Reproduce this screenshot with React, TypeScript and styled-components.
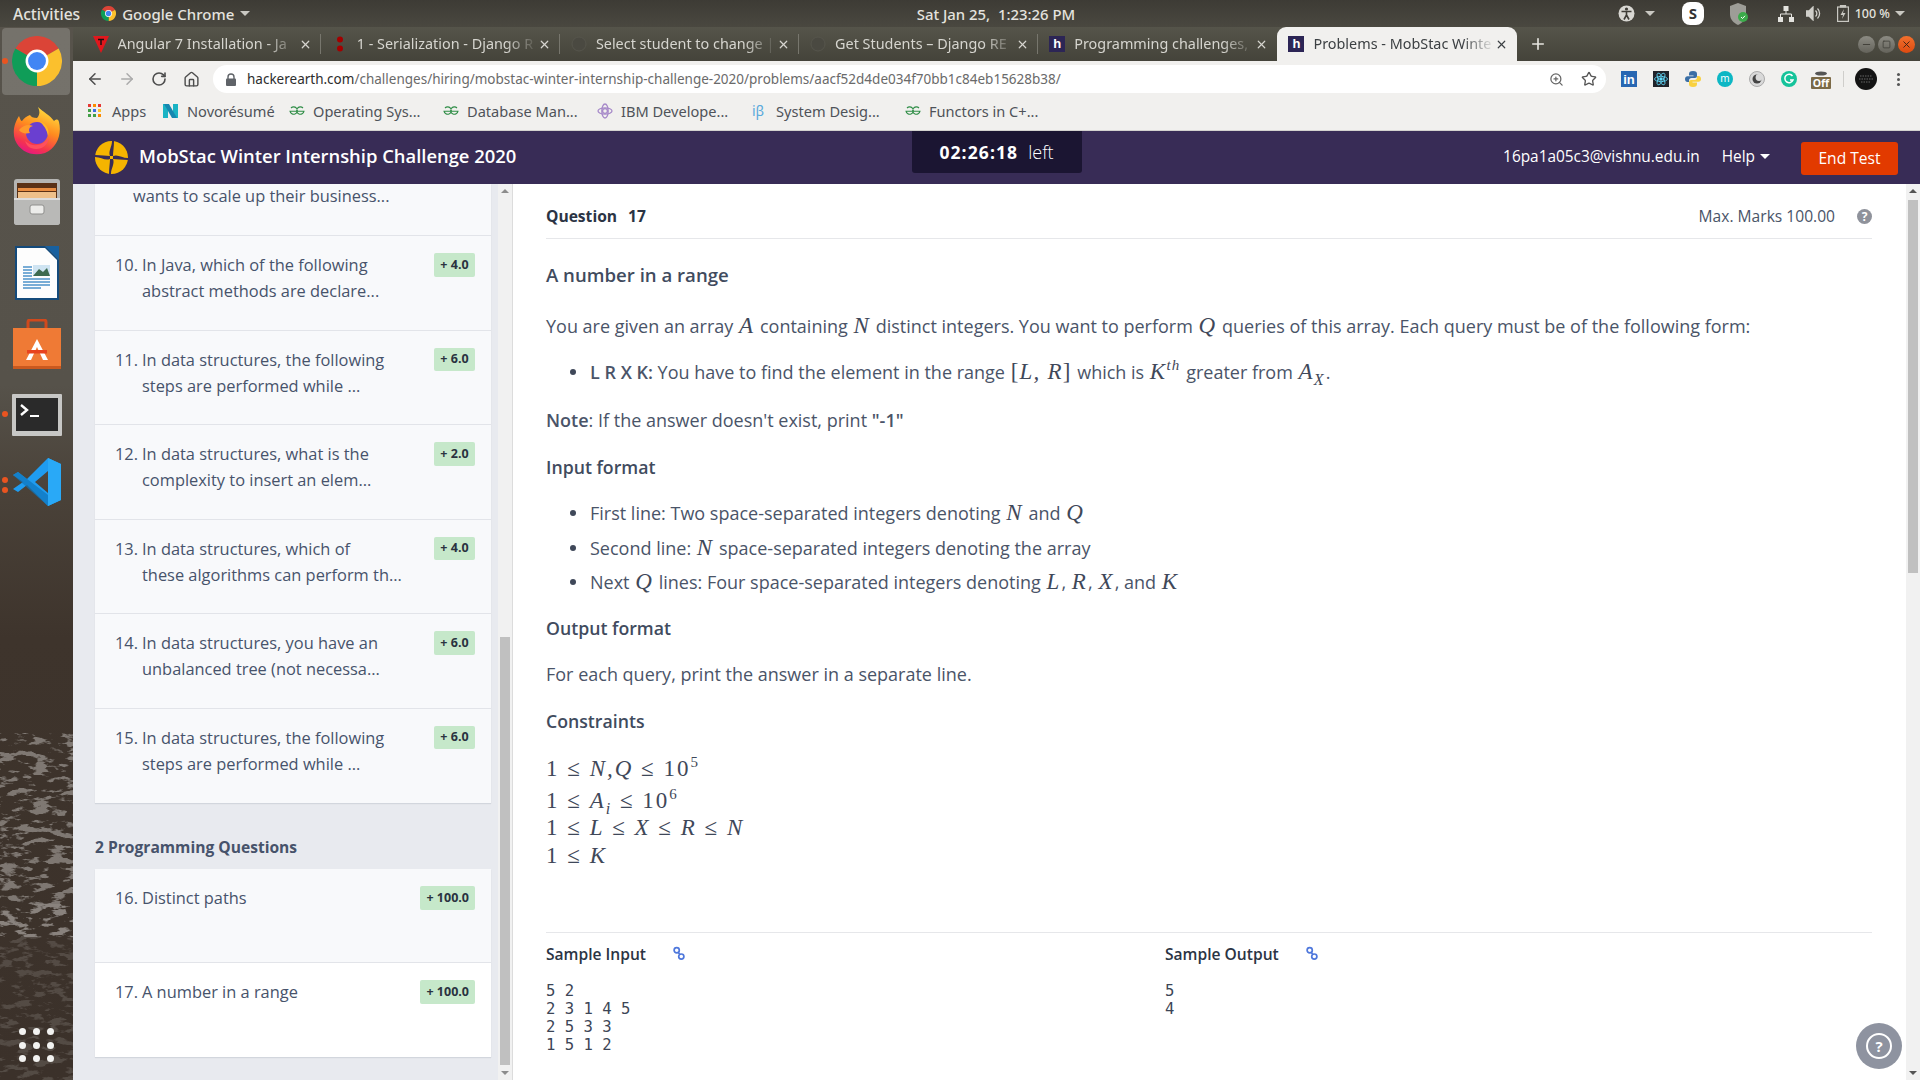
import React from 'react'
import styled, { createGlobalStyle } from 'styled-components'
import { ArrowLeft, ArrowRight, RotateCw, House, ZoomIn, Star, Plus, X, Minus, Square } from 'lucide-react'

const GlobalStyle = createGlobalStyle`
  html, body { margin: 0; padding: 0; height: 100%; overflow: hidden; }
  body { font-family: "Open Sans", "Noto Sans", sans-serif; color: #47536b; }
  * { box-sizing: border-box; }
`

const Screen = styled.div`
  width: 1920px;
  height: 1080px;
  display: flex;
  flex-direction: column;
  overflow: hidden;
`

/* gnome top bar */
const TopBar = styled.div`
  height: 27px;
  flex: none;
  display: grid;
  grid-template-columns: 1fr auto 1fr;
  align-items: center;
  padding-bottom: 1px;
  background: linear-gradient(#3d3b35, #4a4840);
  color: #e4e3df;
  font-family: "Noto Sans", sans-serif;
  font-size: 15px;
  font-weight: 500;
`
const TopLeft = styled.div`
  display: flex;
  align-items: center;
  padding-left: 13px;
  font-size: 15.6px;
`
const AppMenu = styled.div`
  display: flex;
  align-items: center;
  gap: 6px;
  margin-left: 21px;
  font-size: 15px;
`
const Caret = styled.span<{ $color?: string }>`
  display: inline-block;
  width: 0;
  height: 0;
  border-left: 5px solid transparent;
  border-right: 5px solid transparent;
  border-top: 5px solid ${p => p.$color || '#c9c8c2'};
`
const Clock = styled.div`
  font-size: 14.9px;
  margin-left: 72px;
`
const Tray = styled.div`
  display: flex;
  justify-content: flex-end;
  align-items: center;
  height: 27px;
  padding-right: 10px;
  font-size: 12.5px;
`
const TraySlot = styled.span<{ $w: number; $gap?: number }>`
  width: ${p => p.$w}px;
  margin-left: ${p => p.$gap || 0}px;
  display: flex;
  align-items: center;
  justify-content: center;
  flex: none;
`

const Body = styled.div`
  flex: 1;
  display: flex;
  min-height: 0;
`

/* launcher */
const Dock = styled.div`
  position: relative;
  width: 73px;
  flex: none;
  display: flex;
  flex-direction: column;
  overflow: hidden;
  background: linear-gradient(#57534b 0%, #56524a 34%, #4a4239 44%, #3e342c 58%, #3b312a 100%);
`
const Wallpaper = styled.svg`
  position: absolute;
  left: 0;
  top: 0;
  pointer-events: none;
`
const DockSlot = styled.div<{ $h: number; $active?: boolean }>`
  position: relative;
  height: ${p => p.$h}px;
  flex: none;
  display: flex;
  align-items: center;
  justify-content: center;
  &::before {
    content: '';
    display: ${p => (p.$active ? 'block' : 'none')};
    position: absolute;
    left: 2px;
    right: 3px;
    top: 1px;
    bottom: 0;
    border-radius: 4px;
    background: rgba(255, 255, 255, 0.18);
  }
  svg { position: relative; }
`
const RunDot = styled.span<{ $top: number }>`
  position: absolute;
  left: 2px;
  top: ${p => p.$top}px;
  width: 6px;
  height: 6px;
  border-radius: 50%;
  background: #e95420;
`
const DockGrid = styled.div`
  position: relative;
  margin-top: auto;
  margin-bottom: 18px;
  margin-left: 19px;
  width: 35px;
  display: grid;
  grid-template-columns: repeat(3, 7px);
  justify-content: space-between;
  row-gap: 6.5px;
`
const GridDot = styled.span`
  width: 7px;
  height: 7px;
  border-radius: 50%;
  background: #f2f2f0;
`

const Window = styled.div`
  flex: 1;
  min-width: 0;
  display: flex;
  flex-direction: column;
`

/* chrome */
const TabStrip = styled.div`
  height: 34px;
  flex: none;
  display: flex;
  align-items: flex-end;
  padding-left: 8.5px;
  background: linear-gradient(#55544a, #44433a);
  font-family: "Noto Sans", sans-serif;
  font-size: 14.4px;
`
const Tab = styled.div<{ $active?: boolean; $sep?: boolean }>`
  position: relative;
  width: 239.2px;
  height: 34px;
  flex: none;
  display: flex;
  align-items: center;
  padding: 0 9px 0 11px;
  color: ${p => (p.$active ? '#3c4043' : '#d6d5cf')};
  background: ${p => (p.$active ? '#f1f0ee' : 'transparent')};
  border-radius: 9px 9px 0 0;
  &::after {
    content: '';
    display: ${p => (p.$sep ? 'block' : 'none')};
    position: absolute;
    right: 0;
    top: 7px;
    bottom: 7px;
    width: 1px;
    background: #77766d;
  }
`
const TabIcon = styled.span`
  width: 16px;
  height: 18px;
  flex: none;
  display: flex;
  align-items: center;
  justify-content: center;
`
const TabTitle = styled.span`
  flex: 1;
  margin: 0 0 1px 9px;
  overflow: hidden;
  white-space: nowrap;
  -webkit-mask-image: linear-gradient(90deg, #000 82%, transparent 100%);
  mask-image: linear-gradient(90deg, #000 82%, transparent 100%);
`
const HFav = styled.span`
  width: 16px;
  height: 16px;
  background: #2c2555;
  color: #fff;
  font-size: 13px;
  font-weight: 700;
  line-height: 15px;
  text-align: center;
  font-family: "Liberation Sans", sans-serif;
`
const NewTab = styled.div`
  margin-left: 12px;
  height: 34px;
  display: flex;
  align-items: center;
  color: #e6e5df;
`
const WinButtons = styled.div`
  margin-left: auto;
  height: 34px;
  padding-right: 5px;
  display: flex;
  align-items: center;
  gap: 3px;
`
const WinButton = styled.span<{ $close?: boolean }>`
  width: 17px;
  height: 17px;
  border-radius: 50%;
  display: flex;
  align-items: center;
  justify-content: center;
  color: ${p => (p.$close ? '#3a2216' : '#3e3d37')};
  background: ${p => (p.$close ? 'linear-gradient(#f2702d, #dd4a10)' : 'linear-gradient(#8c8b83, #64635b)')};
`
const Toolbar = styled.div`
  height: 32px;
  flex: none;
  display: flex;
  align-items: center;
  background: #f1f0ee;
  padding: 4px 0 0 6px;
  color: #5b5b5b;
`
const NavSlot = styled.span<{ $faded?: boolean }>`
  width: 32px;
  flex: none;
  display: flex;
  justify-content: center;
  color: ${p => (p.$faded ? '#ababab' : '#4d4d4d')};
`
const Omnibox = styled.div`
  width: 1393px;
  height: 28px;
  margin-left: 6px;
  flex: none;
  display: flex;
  align-items: center;
  background: #fff;
  border-radius: 14px;
  padding: 0 4px 0 13px;
  font-family: "Noto Sans", sans-serif;
  font-size: 13.5px;
  color: #6a6a6a;
`
const Url = styled.span`
  margin-left: 11px;
  white-space: nowrap;
  flex: 1;
  b { font-weight: 400; color: #2d2d2d; }
`
const Extensions = styled.div`
  flex: 1;
  display: flex;
  align-items: center;
`
const ExtSlot = styled.span<{ $w: number }>`
  width: ${p => p.$w}px;
  flex: none;
  display: flex;
  justify-content: center;
  align-items: center;
`
const ExtDivider = styled.span`
  width: 1px;
  height: 16px;
  margin: 0 10px 0 6px;
  background: #cfcecb;
`
const MenuDots = styled.span`
  width: 3px;
  height: 3px;
  border-radius: 50%;
  background: #555;
  box-shadow: 0 -5px 0 #555, 0 5px 0 #555;
`
const Bookmarks = styled.div`
  height: 38px;
  flex: none;
  display: flex;
  align-items: center;
  padding: 0 0 2px 15px;
  background: #f1f0ee;
  border-bottom: 1px solid #d3d2cf;
  font-family: "Noto Sans", sans-serif;
  font-size: 14.6px;
  color: #4f5359;
`
const Bookmark = styled.div<{ $w: number }>`
  width: ${p => p.$w}px;
  flex: none;
  display: flex;
  align-items: center;
  gap: 8px;
  white-space: nowrap;
`
const BetaMark = styled.span`
  width: 16px;
  color: #5aa9dc;
  font-size: 14px;
`

/* hackerearth header */
const SiteHeader = styled.div`
  height: 53px;
  flex: none;
  display: grid;
  grid-template-columns: 1fr 170px 1fr;
  background: #382c56;
  color: #fff;
`
const Brand = styled.div`
  display: flex;
  align-items: center;
  gap: 11px;
  padding: 0 0 0 22px;
  font-size: 18.4px;
  font-weight: 600;
`
const BrandName = styled.span`
  margin-bottom: 4px;
`
const Timer = styled.div`
  height: 42px;
  display: flex;
  align-items: center;
  justify-content: center;
  gap: 10px;
  background: #1b1532;
  border-radius: 0 0 3px 3px;
  font-size: 18px;
  font-weight: 300;
  b { font-weight: 700; font-size: 17.5px; letter-spacing: 1.1px; }
`
const HeaderRight = styled.div`
  display: flex;
  align-items: center;
  justify-content: flex-end;
  padding-right: 22px;
  font-size: 15.4px;
  padding-top: 1px;
`
const HeaderText = styled.span`
  margin-bottom: 4px;
`
const HelpMenu = styled.span`
  margin: 0 0 4px 22px;
  display: flex;
  align-items: center;
  gap: 5px;
`
const EndButton = styled.button`
  width: 97px;
  height: 33px;
  margin-left: 31px;
  border: 0;
  border-radius: 3px;
  background: #e23a00;
  color: #fff;
  font: 500 15.6px "Open Sans", sans-serif;
`

const Workspace = styled.div`
  position: relative;
  flex: 1;
  min-height: 0;
  display: flex;
`
const Sidebar = styled.div`
  width: 425px;
  flex: none;
  padding: 0 7px 0 22px;
  background: #e8eaef;
  overflow: hidden;
`
const Card = styled.div`
  background: #f8f9fb;
  box-shadow: 0 1px 1px rgba(60, 70, 90, 0.12);
`
const FirstLine = styled.div`
  height: 52px;
  padding: 0 0 0 38px;
  font-size: 16.4px;
  font-weight: 500;
  line-height: 24px;
  border-bottom: 1px solid #e2e4e9;
`
const Row = styled.div<{ $current?: boolean; $last?: boolean; $h?: number }>`
  height: ${p => p.$h || 94.5}px;
  display: flex;
  padding: 16px 16px 0 20px;
  background: ${p => (p.$current ? '#fff' : 'transparent')};
  border-bottom: ${p => (p.$last ? '0' : '1px solid #e2e4e9')};
  font-size: 16.4px;
  font-weight: 500;
  line-height: 26px;
`
const RowNumber = styled.span`
  width: 27px;
  flex: none;
`
const RowText = styled.span`
  flex: 1;
  white-space: pre-line;
`
const Badge = styled.span`
  height: 23.5px;
  min-width: 41px;
  flex: none;
  margin-top: 1px;
  padding: 0 6px;
  display: flex;
  align-items: center;
  justify-content: center;
  background: #c6e8ca;
  border-radius: 2px;
  color: #2a3240;
  font-size: 12.5px;
  font-weight: 700;
`
const GroupTitle = styled.div`
  margin: 32px 0 10px;
  height: 24px;
  line-height: 24px;
  font-size: 15.6px;
  font-weight: 700;
`
const ScrollTrack = styled.div<{ $left?: boolean }>`
  position: relative;
  width: ${p => (p.$left ? 15 : 14)}px;
  flex: none;
  background: #f1f1f1;
  border-right: ${p => (p.$left ? '1px solid #dcdcdc' : '0')};
`
const ScrollThumb = styled.div<{ $top: number; $h: number }>`
  position: absolute;
  left: 2px;
  right: 2px;
  top: ${p => p.$top}px;
  height: ${p => p.$h}px;
  background: #c0c0c0;
`
const ScrollArrow = styled.span<{ $down?: boolean; $dark?: boolean }>`
  position: absolute;
  left: 3px;
  ${p => (p.$down ? 'bottom: 5px;' : 'top: 5px;')}
  width: 0;
  height: 0;
  border-left: 4px solid transparent;
  border-right: 4px solid transparent;
  ${p => (p.$down ? 'border-top' : 'border-bottom')}: 4px solid ${p => (p.$dark ? '#555' : '#8d8d8d')};
`

/* question */
const Main = styled.div`
  flex: 1;
  min-width: 0;
  padding: 0 34px 0 33px;
  background: #fff;
  font-size: 18px;
  color: #4a5468;
`
const QuestionBar = styled.div`
  height: 55px;
  padding-top: 10px;
  display: flex;
  align-items: center;
  justify-content: space-between;
  border-bottom: 1px solid #e6e7ea;
  font-size: 15.6px;
`
const QuestionNo = styled.b`
  color: #2b3444;
  font-weight: 700;
  word-spacing: 7px;
`
const Marks = styled.span`
  display: flex;
  align-items: center;
  gap: 22px;
`
const HelpDot = styled.span`
  width: 15px;
  height: 15px;
  border-radius: 50%;
  background: #8f929b;
  color: #fff;
  font-size: 12px;
  font-weight: 700;
  line-height: 15px;
  text-align: center;
`
const Title = styled.div<{ $top: number; $big?: boolean }>`
  margin-top: ${p => p.$top}px;
  line-height: 24px;
  font-size: ${p => (p.$big ? 18.6 : 17.7)}px;
  font-weight: 600;
  color: #414b5e;
`
const Para = styled.div<{ $top: number }>`
  margin-top: ${p => p.$top}px;
  line-height: 28px;
  white-space: nowrap;
  b { font-weight: 600; }
`
const Item = styled(Para)`
  position: relative;
  padding-left: 44px;
  &::before {
    content: '';
    position: absolute;
    left: 24px;
    top: 11px;
    width: 6px;
    height: 6px;
    border-radius: 50%;
    background: #3f4859;
  }
`
const MathVar = styled.i`
  font-family: "Liberation Serif", "DejaVu Serif", serif;
  font-size: 23px;
  font-style: italic;
  line-height: 1;
  margin: 0 1px;
  color: #3f4859;
  letter-spacing: 1.2px;
  sup { font-size: 15px; line-height: 0; }
  sub { font-size: 16px; line-height: 0; }
`
const Upright = styled.span`
  font-style: normal;
`
const ConstraintLine = styled(Para)`
  ${MathVar} { letter-spacing: 2px; margin: 0; }
`
const Divider = styled.div`
  margin-top: 62px;
  height: 1px;
  background: #e6e7ea;
`
const Samples = styled.div`
  display: grid;
  grid-template-columns: 619px 1fr;
  padding-top: 11px;
`
const SampleHead = styled.div`
  display: flex;
  align-items: center;
  gap: 27px;
  height: 20px;
  color: #2b3444;
  font-size: 15.6px;
  font-weight: 600;
`
const Code = styled.pre`
  margin: 18px 0 0;
  font-family: "DejaVu Sans Mono", "Liberation Mono", monospace;
  font-size: 15.6px;
  line-height: 18px;
  color: #3c4556;
`
const Floating = styled.div`
  position: absolute;
  right: 18px;
  bottom: 11px;
  width: 46px;
  height: 46px;
  border-radius: 50%;
  background: #8e93a0;
  display: flex;
  align-items: center;
  justify-content: center;
`
const FloatingRing = styled.span`
  width: 26px;
  height: 26px;
  border: 2px solid #fff;
  border-radius: 50%;
  color: #fff;
  font-size: 15px;
  font-weight: 700;
  line-height: 22px;
  text-align: center;
`

const ChromeLogo = ({ size }: { size: number }) => (
  <svg width={size} height={size} viewBox="0 0 48 48">
    <path d="M24 24 L3.2 12 A24 24 0 0 1 44.8 12 Z" fill="#db4437" />
    <path d="M24 24 L44.8 12 A24 24 0 0 1 24 48 Z" fill="#fbc02d" />
    <path d="M24 24 L24 48 A24 24 0 0 1 3.2 12 Z" fill="#0f9d58" />
    <circle cx="24" cy="24" r="11" fill="#fff" />
    <circle cx="24" cy="24" r="8.6" fill="#4285f4" />
  </svg>
)

const FirefoxLogo = () => (
  <svg width="48" height="50" viewBox="0 0 48 50">
    <defs>
      <linearGradient id="ffA" x1="0.7" y1="0" x2="0.3" y2="1">
        <stop offset="0" stopColor="#ffe23f" />
        <stop offset="0.45" stopColor="#ff8a1f" />
        <stop offset="0.8" stopColor="#f4334f" />
        <stop offset="1" stopColor="#e31587" />
      </linearGradient>
    </defs>
    <path d="M25 1 C30 6 37 9 41 15 C44 13 45 13 46 16 C49 28 44 42 32 47 C20 51 7 46 2 34 C-1 25 2 16 6 10 C7 13 8 15 9 15 C11 12 14 10 17 9 C18 11 20 12 24 12 C27 9 27 5 25 1 Z" fill="url(#ffA)" />
    <circle cx="24" cy="27" r="11" fill="#6a3fd0" />
    <path d="M6 24 C10 19 16 18 20 20 C16 21 15 24 17 27 C12 28 8 27 6 24 Z" fill="#ff9a2b" />
    <path d="M26 15 C33 17 37 23 35 30 C34 24 31 19 26 15 Z" fill="#ffb52a" />
    <path d="M12 35 C20 42 31 40 36 31 C35 41 26 45 18 42 C15 41 13 38 12 35 Z" fill="#ff4f5e" />
  </svg>
)

const FilesIcon = () => (
  <svg width="48" height="48" viewBox="0 0 48 48">
    <rect x="1" y="1" width="46" height="46" rx="3" fill="#b5b5b3" />
    <rect x="4" y="5" width="40" height="16" fill="#5a3116" />
    <rect x="5" y="10" width="38" height="3" fill="#e88d42" />
    <rect x="5" y="14" width="38" height="6" fill="#eec08a" />
    <path d="M1 21 H47 V44 a3 3 0 0 1 -3 3 H4 a3 3 0 0 1 -3 -3 Z" fill="#b9b9b7" />
    <rect x="1" y="20" width="46" height="2" fill="#ddd" />
    <rect x="17" y="27" width="14" height="9" rx="2" fill="#ececea" stroke="#8f8f8d" />
  </svg>
)

const WriterIcon = () => (
  <svg width="44" height="54" viewBox="0 0 44 54">
    <path d="M0 0 H30 L44 14 V54 H0 Z" fill="#144a7b" />
    <path d="M2 2 H30 L42 14 V52 H2 Z" fill="#fdfdfd" />
    <path d="M30 0 H44 V14 Z" fill="#18609f" />
    <rect x="18" y="19" width="17" height="11" fill="#cfe4f2" />
    <path d="M18 30 L24 23 L28 26 L32 22 L35 30 Z" fill="#3d6b50" />
    <path d="M8 21 H17 M8 24 H17 M8 27 H17 M8 30 H17 M8 33 H35 M8 36 H35 M8 39 H35 M8 42 H26" stroke="#4e93c9" strokeWidth="1.4" />
  </svg>
)

const StoreIcon = () => (
  <svg width="48" height="50" viewBox="0 0 48 50">
    <path d="M15 12 V3 a2 2 0 0 1 2 -2 H31 a2 2 0 0 1 2 2 V12" fill="none" stroke="#d0491c" strokeWidth="3" />
    <path d="M0 9 H48 V49 H0 Z" fill="#ef7a35" />
    <rect y="47" width="48" height="3" fill="#c9591f" />
    <path d="M24 20 L35 41 H30 L24 28 L18 41 H13 Z" fill="#fff" />
    <rect x="14" y="31" width="20" height="3.5" fill="#e8431e" />
  </svg>
)

const TerminalIcon = () => (
  <svg width="50" height="42" viewBox="0 0 50 42">
    <rect width="50" height="42" rx="1" fill="#c7c7c5" />
    <rect x="4" y="4" width="42" height="33" fill="#2a2a2a" />
    <path d="M9 11 L15 16 L9 21" fill="none" stroke="#fff" strokeWidth="2.4" />
    <rect x="18" y="21" width="9" height="2" fill="#fff" />
  </svg>
)

const VsCodeIcon = () => (
  <svg width="48" height="48" viewBox="0 0 48 48">
    <path d="M35 0 L48 6 V42 L35 48 L14 27 L5 34 L0 31 L10 24 L0 17 L5 14 L14 21 Z M35 13 L22 24 L35 35 Z" fill="#1f9cf0" fillRule="evenodd" />
    <path d="M35 0 L48 6 V42 L35 48 Z M35 13" fill="#29a9f7" />
    <path d="M0 17 L5 14 L35 37 V48 Z" fill="#0e75bb" opacity="0.7" />
  </svg>
)

const MobStacLogo = () => (
  <svg width="33" height="33" viewBox="0 0 33 33">
    <circle cx="16.5" cy="16.5" r="16.5" fill="#f5b400" />
    <g fill="#382c56">
      <path d="M15 15 C13 10 17 6 17 0 L19 0 C19 6 18 11 18 15 Z" />
      <path d="M18 15 C23 13 27 17 33 17 L33 19 C27 19 22 18 18 18 Z" />
      <path d="M18 18 C20 23 16 27 16 33 L14 33 C14 27 15 22 15 18 Z" />
      <path d="M15 18 C10 20 6 16 0 16 L0 14 C6 14 11 15 15 15 Z" />
    </g>
  </svg>
)

const AppsIcon = () => (
  <svg width="16" height="13" viewBox="0 0 16 13">
    {['#e53935', '#fb8c00', '#e53935', '#43a047', '#3f6fe0', '#fbc02d', '#43a047', '#43a047', '#fb8c00'].map((c, i) => (
      <rect key={i} x={(i % 3) * 5} y={Math.floor(i / 3) * 5} width="3" height="3" fill={c} />
    ))}
  </svg>
)

const GfgIcon = () => (
  <svg width="16" height="12" viewBox="0 0 16 12" fill="none" stroke="#2f8d46" strokeWidth="1.1">
    <path d="M8 6.2 H1 A3.7 3.7 0 1 0 2 3 M8 6.2 H15 A3.7 3.7 0 1 1 14 3" />
  </svg>
)

const PythonIcon = () => (
  <svg width="16" height="16" viewBox="0 0 16 16">
    <path d="M8 0 C5 0 4 1 4 3 V4.5 H8.5 V5.2 H2.5 C1 5.2 0 6.3 0 8 C0 10 1 11 2.5 11 H4 V9.5 C4 8 5 7 6.5 7 H10 C11.2 7 12 6.2 12 5 V3 C12 1 11 0 8 0 Z" fill="#3a6ea5" />
    <path d="M8 16 C11 16 12 15 12 13 V11.5 H7.5 V10.8 H13.5 C15 10.8 16 9.7 16 8 C16 6 15 5 13.5 5 H12 V6.5 C12 8 11 9 9.5 9 H6 C4.8 9 4 9.8 4 11 V13 C4 15 5 16 8 16 Z" fill="#f9d13f" />
  </svg>
)

const LinkIcon = () => (
  <svg width="12" height="15" viewBox="0 0 12 15" fill="none" stroke="#4f78dc" strokeWidth="1.7">
    <circle cx="3.7" cy="4.2" r="2.6" />
    <circle cx="8.3" cy="10.6" r="2.6" />
    <path d="M5.2 6.3 L6.8 8.5" />
  </svg>
)

const tabs = [
  { title: 'Angular 7 Installation - Ja', icon: <svg width="16" height="17" viewBox="0 0 16 17"><path d="M0 0 H16 L8 17 Z" fill="#e1171d" /><path d="M5 3.5 H11 M8 3.5 V9" stroke="#111" strokeWidth="1.4" /></svg> },
  { title: '1 - Serialization - Django R', icon: <svg width="6" height="16" viewBox="0 0 6 16"><circle cx="3" cy="3.5" r="3" fill="#a30000" /><circle cx="3" cy="12.5" r="3" fill="#a30000" /></svg> },
  { title: 'Select student to change |', icon: <svg width="16" height="16"><circle cx="8" cy="8" r="7" fill="#4a4941" stroke="#56554c" /></svg> },
  { title: 'Get Students – Django RE', icon: <svg width="16" height="16"><circle cx="8" cy="8" r="7" fill="#4a4941" stroke="#56554c" /></svg> },
  { title: 'Programming challenges,', icon: <HFav>h</HFav> },
]

const bookmarks = [
  { label: 'Apps', icon: <AppsIcon />, w: 74 },
  { label: 'Novorésumé', icon: <svg width="17" height="16" viewBox="0 0 17 16"><path d="M1 1 L6 1 L6 15 L1 15 Z M11 1 L16 1 L16 15 L11 15 Z" fill="#1ab3c4" /><path d="M2 1 L7 1 L15 15 L10 15 Z" fill="#1687b0" /></svg>, w: 127 },
  { label: 'Operating Sys...', icon: <GfgIcon />, w: 154 },
  { label: 'Database Man...', icon: <GfgIcon />, w: 154 },
  { label: 'IBM Develope...', icon: <svg width="16" height="16" viewBox="0 0 16 16" fill="none" stroke="#a78ac9" strokeWidth="1.3"><ellipse cx="8" cy="8" rx="7" ry="3.2" /><ellipse cx="8" cy="8" rx="3.2" ry="7" /><circle cx="8" cy="8" r="2.4" /></svg>, w: 155 },
  { label: 'System Desig...', icon: <BetaMark>iβ</BetaMark>, w: 153 },
  { label: 'Functors in C+...', icon: <GfgIcon />, w: 160 },
]

const questions = [
  ['10.', 'In Java, which of the following\nabstract methods are declare...', '+ 4.0'],
  ['11.', 'In data structures, the following\nsteps are performed while ...', '+ 6.0'],
  ['12.', 'In data structures, what is the\ncomplexity to insert an elem...', '+ 2.0'],
  ['13.', 'In data structures, which of\nthese algorithms can perform th...', '+ 4.0'],
  ['14.', 'In data structures, you have an\nunbalanced tree (not necessa...', '+ 6.0'],
  ['15.', 'In data structures, the following\nsteps are performed while ...', '+ 6.0'],
]

export default function App() {
  return (
    <Screen>
      <GlobalStyle />
      <TopBar>
        <TopLeft>
          Activities
          <AppMenu>
            <ChromeLogo size={15} />
            Google Chrome
            <Caret />
          </AppMenu>
        </TopLeft>
        <Clock>Sat Jan 25,&nbsp; 1:23:26 PM</Clock>
        <Tray>
          <TraySlot $w={20}>
            <svg width="17" height="17" viewBox="0 0 17 17"><circle cx="8.5" cy="8.5" r="8" fill="#d8d7d2" /><circle cx="8.5" cy="4" r="1.6" fill="#3f3d37" /><path d="M3.5 6.5 H13.5 M8.5 6.5 V10 M8.5 10 L6 14.5 M8.5 10 L11 14.5" stroke="#3f3d37" strokeWidth="1.6" fill="none" /></svg>
          </TraySlot>
          <TraySlot $w={26}><Caret /></TraySlot>
          <TraySlot $w={60}>
            <svg width="22" height="23" viewBox="0 0 22 23"><rect width="22" height="23" rx="8" fill="#fff" /><text x="11" y="17" textAnchor="middle" fontSize="15" fontWeight="700" fill="#333" fontFamily="Noto Sans">S</text></svg>
          </TraySlot>
          <TraySlot $w={32}>
            <svg width="20" height="24" viewBox="0 0 20 24"><path d="M9 1 L17 4 V12 C17 18 13 21 9 23 C5 21 1 18 1 12 V4 Z" fill="#9d9d97" /><circle cx="14" cy="15" r="5" fill="#3bab4a" /><path d="M12 15 L13.5 16.5 L16 13.8" stroke="#fff" fill="none" /></svg>
          </TraySlot>
          <TraySlot $w={22} $gap={20}>
            <svg width="16" height="16" viewBox="0 0 16 16" fill="#e4e3df"><rect x="5.5" y="0" width="5" height="5" /><rect x="0" y="11" width="5" height="5" /><rect x="11" y="11" width="5" height="5" /><path d="M8 5 V8 M2.5 11 V8 H13.5 V11" stroke="#e4e3df" fill="none" /></svg>
          </TraySlot>
          <TraySlot $w={34}>
            <svg width="16" height="15" viewBox="0 0 16 15" fill="none" stroke="#d0cfca" strokeWidth="1.3"><path d="M0 5 H3 L7 1 V14 L3 10 H0 Z" fill="#d0cfca" /><path d="M9.5 4.5 A4 4 0 0 1 9.5 10.5 M11.5 2.5 A7 7 0 0 1 11.5 12.5" /></svg>
          </TraySlot>
          <TraySlot $w={24}>
            <svg width="12" height="17" viewBox="0 0 12 17" fill="none" stroke="#c9c8c2" strokeWidth="1.2"><rect x="0.6" y="2" width="10.8" height="14.4" /><rect x="3.5" y="0" width="5" height="2" fill="#c9c8c2" /><path d="M7 4 L3.5 10 H6 L5 14 L8.5 8 H6 Z" fill="#c9c8c2" stroke="none" /></svg>
          </TraySlot>
          <span>100 %</span>
          <TraySlot $w={20}><Caret /></TraySlot>
        </Tray>
      </TopBar>
      <Body>
        <Dock>
          <Wallpaper width="73" height="1053">
            <filter id="rock">
              <feTurbulence type="fractalNoise" baseFrequency="0.06 0.16" numOctaves="4" seed="8" />
              <feColorMatrix values="0 0 0 0 0.46  0 0 0 0 0.44  0 0 0 0 0.42  0 0 0 9 -4.7" />
            </filter>
            <rect y="723" width="73" height="170" filter="url(#rock)" opacity="0.55" />
            <rect y="893" width="73" height="160" filter="url(#rock)" opacity="0.2" />
          </Wallpaper>
          <DockSlot $h={68} $active>
            <RunDot $top={31} />
            <ChromeLogo size={50} />
          </DockSlot>
          <DockSlot $h={71}><FirefoxLogo /></DockSlot>
          <DockSlot $h={71}><FilesIcon /></DockSlot>
          <DockSlot $h={71}><WriterIcon /></DockSlot>
          <DockSlot $h={71}><StoreIcon /></DockSlot>
          <DockSlot $h={71}>
            <RunDot $top={32} />
            <TerminalIcon />
          </DockSlot>
          <DockSlot $h={64}>
            <RunDot $top={27} />
            <RunDot $top={37} />
            <VsCodeIcon />
          </DockSlot>
          <DockGrid>
            {Array.from({ length: 9 }).map((_, i) => <GridDot key={i} />)}
          </DockGrid>
        </Dock>
        <Window>
          <TabStrip>
            {tabs.map((t, i) => (
              <Tab key={t.title} $sep={i < 4}>
                <TabIcon>{t.icon}</TabIcon>
                <TabTitle>{t.title}</TabTitle>
                <X size={13} strokeWidth={2.2} />
              </Tab>
            ))}
            <Tab $active>
              <TabIcon><HFav>h</HFav></TabIcon>
              <TabTitle>Problems - MobStac Winte</TabTitle>
              <X size={13} strokeWidth={2.2} />
            </Tab>
            <NewTab><Plus size={18} strokeWidth={2.2} /></NewTab>
            <WinButtons>
              <WinButton><Minus size={11} /></WinButton>
              <WinButton><Square size={9} /></WinButton>
              <WinButton $close><X size={11} /></WinButton>
            </WinButtons>
          </TabStrip>
          <Toolbar>
            <NavSlot><ArrowLeft size={18} /></NavSlot>
            <NavSlot $faded><ArrowRight size={18} /></NavSlot>
            <NavSlot><RotateCw size={16} strokeWidth={2.4} /></NavSlot>
            <NavSlot><House size={17} /></NavSlot>
            <Omnibox>
              <svg width="10" height="13" viewBox="0 0 10 13"><path d="M2 6 V4 a3 3 0 0 1 6 0 V6" fill="none" stroke="#5f6368" strokeWidth="1.4" /><rect y="5.5" width="10" height="7.5" rx="1" fill="#5f6368" /></svg>
              <Url><b>hackerearth.com</b>/challenges/hiring/mobstac-winter-internship-challenge-2020/problems/aacf52d4de034f70bb1c84eb15628b38/</Url>
              <ExtSlot $w={40}><ZoomIn size={15} color="#666" /></ExtSlot>
              <ExtSlot $w={26}><Star size={16} color="#555" /></ExtSlot>
            </Omnibox>
            <Extensions>
              <ExtSlot $w={7} />
              <ExtSlot $w={32}>
                <svg width="16" height="16" viewBox="0 0 16 16"><rect width="16" height="16" fill="#2867b2" /><text x="8" y="13" textAnchor="middle" fontSize="13" fontWeight="700" fill="#fff" fontFamily="Liberation Sans">in</text></svg>
              </ExtSlot>
              <ExtSlot $w={32}>
                <svg width="16" height="16" viewBox="0 0 16 16" fill="none" stroke="#61dafb" strokeWidth="0.8"><rect width="16" height="16" fill="#20232a" stroke="none" /><ellipse cx="8" cy="8" rx="6.5" ry="2.6" /><ellipse cx="8" cy="8" rx="6.5" ry="2.6" transform="rotate(60 8 8)" /><ellipse cx="8" cy="8" rx="6.5" ry="2.6" transform="rotate(120 8 8)" /><circle cx="8" cy="8" r="1.3" fill="#61dafb" /></svg>
              </ExtSlot>
              <ExtSlot $w={32}><PythonIcon /></ExtSlot>
              <ExtSlot $w={32}>
                <svg width="16" height="16" viewBox="0 0 16 16"><circle cx="8" cy="8" r="8" fill="#0db7c4" /><text x="8" y="11" textAnchor="middle" fontSize="10" fill="#fff" fontFamily="Noto Sans">m</text></svg>
              </ExtSlot>
              <ExtSlot $w={32}>
                <svg width="16" height="16" viewBox="0 0 16 16"><circle cx="8" cy="8" r="7.5" fill="#d9d9d9" stroke="#aaa" /><circle cx="8" cy="8" r="4.5" fill="#444" /><circle cx="10" cy="6.5" r="3.4" fill="#d9d9d9" /></svg>
              </ExtSlot>
              <ExtSlot $w={32}>
                <svg width="16" height="16" viewBox="0 0 16 16"><circle cx="8" cy="8" r="8" fill="#15c39a" /><path d="M11.5 5 A4.2 4.2 0 1 0 12 9 H9" fill="none" stroke="#fff" strokeWidth="1.5" /></svg>
              </ExtSlot>
              <ExtSlot $w={32}>
                <svg width="20" height="20" viewBox="0 0 20 20"><ellipse cx="10" cy="4.5" rx="6" ry="2" fill="#555" /><rect y="8" width="20" height="12" rx="1" fill="#7b6a47" /><text x="10" y="18" textAnchor="middle" fontSize="10.5" fontWeight="700" fill="#fff" fontFamily="Noto Sans">Off</text></svg>
              </ExtSlot>
              <ExtDivider />
              <ExtSlot $w={24}>
                <svg width="22" height="22" viewBox="0 0 22 22"><circle cx="11" cy="11" r="11" fill="#141414" /><path d="M5 8 H17 M4 11 H18 M6 14 H16" stroke="#666" strokeDasharray="1.5 1" /></svg>
              </ExtSlot>
              <ExtSlot $w={40}><MenuDots /></ExtSlot>
            </Extensions>
          </Toolbar>
          <Bookmarks>
            {bookmarks.map(b => (
              <Bookmark key={b.label} $w={b.w}>
                {b.icon}
                {b.label}
              </Bookmark>
            ))}
          </Bookmarks>
          <SiteHeader>
            <Brand>
              <MobStacLogo />
              <BrandName>MobStac Winter Internship Challenge 2020</BrandName>
            </Brand>
            <Timer>
              <b>02:26:18</b> left
            </Timer>
            <HeaderRight>
              <HeaderText>16pa1a05c3@vishnu.edu.in</HeaderText>
              <HelpMenu>Help <Caret $color="#fff" /></HelpMenu>
              <EndButton>End Test</EndButton>
            </HeaderRight>
          </SiteHeader>
          <Workspace>
            <Sidebar>
              <Card>
                <FirstLine>wants to scale up their business...</FirstLine>
                {questions.map((q, i) => (
                  <Row key={q[0]} $last={i === questions.length - 1}>
                    <RowNumber>{q[0]}</RowNumber>
                    <RowText>{q[1]}</RowText>
                    <Badge>{q[2]}</Badge>
                  </Row>
                ))}
              </Card>
              <GroupTitle>2 Programming Questions</GroupTitle>
              <Card>
                <Row $h={94}>
                  <RowNumber>16.</RowNumber>
                  <RowText>Distinct paths</RowText>
                  <Badge>+ 100.0</Badge>
                </Row>
                <Row $current $last $h={94}>
                  <RowNumber>17.</RowNumber>
                  <RowText>A number in a range</RowText>
                  <Badge>+ 100.0</Badge>
                </Row>
              </Card>
            </Sidebar>
            <ScrollTrack $left>
              <ScrollArrow />
              <ScrollThumb $top={453} $h={428} />
              <ScrollArrow $down />
            </ScrollTrack>
            <Main>
              <QuestionBar>
                <QuestionNo>Question 17</QuestionNo>
                <Marks>Max. Marks 100.00 <HelpDot>?</HelpDot></Marks>
              </QuestionBar>
              <Title $top={24} $big>A number in a range</Title>
              <Para $top={25}>
                You are given an array <MathVar>A</MathVar> containing <MathVar>N</MathVar> distinct integers. You want to perform <MathVar>Q</MathVar> queries of this array. Each query must be of the following form:
              </Para>
              <Item $top={18}>
                <b>L R X K:</b> You have to find the element in the range <MathVar><Upright>[</Upright>L, R<Upright>]</Upright></MathVar> which is <MathVar>K<sup>th</sup></MathVar> greater from <MathVar>A<sub>X</sub></MathVar>.
              </Item>
              <Para $top={20}><b>Note</b>: If the answer doesn't exist, print <b>"-1"</b></Para>
              <Title $top={21}>Input format</Title>
              <Item $top={20}>First line: Two space-separated integers denoting <MathVar>N</MathVar> and <MathVar>Q</MathVar></Item>
              <Item $top={7}>Second line: <MathVar>N</MathVar> space-separated integers denoting the array</Item>
              <Item $top={6}>Next <MathVar>Q</MathVar> lines: Four space-separated integers denoting <MathVar>L</MathVar>, <MathVar>R</MathVar>, <MathVar>X</MathVar>, and <MathVar>K</MathVar></Item>
              <Title $top={20}>Output format</Title>
              <Para $top={20}>For each query, print the answer in a separate line.</Para>
              <Title $top={21}>Constraints</Title>
              <ConstraintLine $top={22}><MathVar><Upright>1 ≤ </Upright>N,Q<Upright> ≤ 10<sup>5</sup></Upright></MathVar></ConstraintLine>
              <ConstraintLine $top={3.5}><MathVar><Upright>1 ≤ </Upright>A<sub>i</sub><Upright> ≤ 10<sup>6</sup></Upright></MathVar></ConstraintLine>
              <ConstraintLine $top={-1}><MathVar><Upright>1 ≤ </Upright>L<Upright> ≤ </Upright>X<Upright> ≤ </Upright>R<Upright> ≤ </Upright>N</MathVar></ConstraintLine>
              <ConstraintLine $top={0}><MathVar><Upright>1 ≤ </Upright>K</MathVar></ConstraintLine>
              <Divider />
              <Samples>
                <div>
                  <SampleHead>Sample Input <LinkIcon /></SampleHead>
                  <Code>{'5 2\n2 3 1 4 5\n2 5 3 3\n1 5 1 2'}</Code>
                </div>
                <div>
                  <SampleHead>Sample Output <LinkIcon /></SampleHead>
                  <Code>{'5\n4'}</Code>
                </div>
              </Samples>
            </Main>
            <ScrollTrack>
              <ScrollArrow $dark />
              <ScrollThumb $top={16} $h={373} />
              <ScrollArrow $down $dark />
            </ScrollTrack>
            <Floating><FloatingRing>?</FloatingRing></Floating>
          </Workspace>
        </Window>
      </Body>
    </Screen>
  )
}
